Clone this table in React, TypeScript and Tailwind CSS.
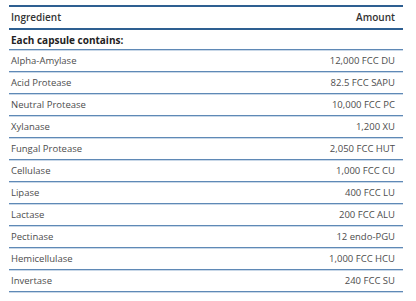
import React from "react";

const rows: [string, string][] = [
  ["Alpha-Amylase", "12,000 FCC DU"],
  ["Acid Protease", "82.5 FCC SAPU"],
  ["Neutral Protease", "10,000 FCC PC"],
  ["Xylanase", "1,200 XU"],
  ["Fungal Protease", "2,050 FCC HUT"],
  ["Cellulase", "1,000 FCC CU"],
  ["Lipase", "400 FCC LU"],
  ["Lactase", "200 FCC ALU"],
  ["Pectinase", "12 endo-PGU"],
  ["Hemicellulase", "1,000 FCC HCU"],
  ["Invertase", "240 FCC SU"],
];

export default function App() {
  return (
    <div
      className="w-[416px] h-[301px] bg-white overflow-hidden"
      style={{ fontFamily: '"Open Sans", "Liberation Sans", sans-serif' }}
    >
      <div className="ml-[9px] mt-[5px] w-[394px] border-t-2 border-[#2e5f91]">
        <div className="flex h-[23px] items-center justify-between pl-[2px] pr-[8px] text-[10px] font-semibold text-[#333] border-b-2 border-[#2e5f91]">
          <span>Ingredient</span>
          <span>Amount</span>
        </div>
        <div className="flex h-[21px] items-center pl-[2px] pr-[8px] text-[10px] font-bold text-[#222] border-b border-[#c9d8e8] shadow-[inset_0_-1px_0_#5f89b6]">
          <span>Each capsule contains:</span>
        </div>
        {rows.map(([name, amt]) => (
          <div
            key={name}
            className="flex h-[22px] items-center justify-between pl-[2px] pr-[8px] text-[9.5px] text-[#4d4d4d] border-b border-[#c9d8e8] shadow-[inset_0_-1px_0_#5f89b6]"
          >
            <span>{name}</span>
            <span>{amt}</span>
          </div>
        ))}
      </div>
    </div>
  );
}
